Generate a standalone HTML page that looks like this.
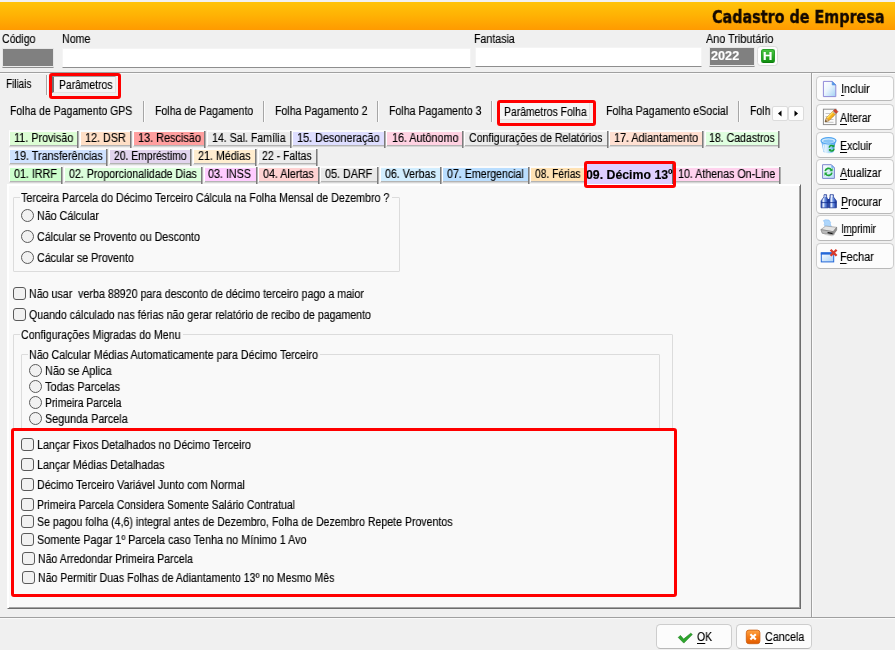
<!DOCTYPE html>
<html lang="pt-BR"><head><meta charset="utf-8"><title>Cadastro de Empresa</title>
<style>
html,body{margin:0;padding:0}
body{width:895px;height:650px;overflow:hidden;background:#f0f0f0}
#app{position:relative;width:895px;height:650px;overflow:hidden;background:#f0f0f0;font:12px 'Liberation Sans',sans-serif;color:#000}
#app div,#app span{position:absolute;box-sizing:border-box}
.t{white-space:nowrap;transform-origin:0 50%;z-index:5;will-change:transform;-webkit-text-stroke:.15px currentColor}
.t u{text-decoration:underline;text-underline-offset:1.6px;text-decoration-thickness:1px}
.topw{left:0;top:0;width:895px;height:2px;background:#f1f1f1}
.bar{left:0;top:2px;width:895px;height:28px;background:linear-gradient(#ffc30a,#ffb304 45%,#ff9a00)}
.graybox{background:linear-gradient(#808080,#808080) 0 0/100% 17px no-repeat #ececec;border:1px solid #e6e6e6;border-bottom-color:#8e8e8e}
.inp{background:#fff;border:1px solid #f4f4f4;border-bottom-color:#8e8e8e}
.hbtn{left:757px;top:46px;width:21px;height:20px;background:#fdfdfd;border:1px solid #dadada;border-radius:3.5px}
.hin{left:3px;top:2px;width:14px;height:14px;border-radius:2.5px;background:linear-gradient(#48c440,#129012);border:1px solid #2aa02a;border-bottom-color:#0c7c0c}
.hl{height:2px;background:linear-gradient(#a0a0a0 50%,#fafafa 50%)}
.vl{width:2px;background:linear-gradient(90deg,#a0a0a0 50%,#fafafa 50%)}
.vsep{width:2px;background:linear-gradient(90deg,#a6a6a6 50%,#fcfcfc 50%)}
.seltab{background:#f6f6f6;border-left:2px solid #707070;border-top:1px solid #a0a0a0;border-right:1px solid #e4e4e4;border-bottom:1px solid #e4e4e4}
.red{border:3px solid #ff0000;border-radius:3px;z-index:8}
.scr{width:16px;height:15px;background:#fdfdfd;border:1px solid #dcdcdc;border-radius:2px}
.scr svg{position:absolute;left:-1px;top:-1px}
.ct{height:17px;border-top:2px solid #fbfbfb;border-left:1px solid #fff;border-bottom:2px solid #d6d6d6}
.ct::before{content:"";position:absolute;left:0;right:0;bottom:-1px;height:1px;background:#b4b4b4}
.ct::after{content:"";position:absolute;right:0;top:-1px;width:2px;height:17px;background:linear-gradient(90deg,#7c7c7c 50%,#b0b0b0 50%)}
.ctsel{background:#decfff;border-right:1px solid #6e6e6e}
.panel{left:7px;top:184px;width:794px;height:425px;background:#f9f9f9;border:1px solid;border-color:#fff #6c6c6c #6c6c6c #fff;box-shadow:inset 1px 1px 0 #fff,inset -1px -1px 0 #a4a4a4}
.gb{border:1px solid #dcdcdc;border-radius:1px}
.gbl{height:8px;background:#f9f9f9}
.rd{width:13px;height:13px;border-radius:50%;border:1px solid #5a5a5a;background:#f1f1f1}
.cb{width:13px;height:13px;border-radius:3px;border:1px solid #5a5a5a;background:#f1f1f1}
.redfill{background:#f9f9f9}
.btn{background:#fcfcfc;border:1px solid #cdcdcd;border-bottom-color:#b9b9b9;border-radius:4.5px}
.ico{width:24px;height:25px}
.ico svg{position:absolute;left:0;top:0}

</style></head>
<body>
<div id="app">
<div class="topw"></div><div class="bar"></div>
<div class="graybox" style="left:2px;top:48px;width:52px;height:20px"></div>
<div class="inp" style="left:62px;top:48px;width:409px;height:20px"></div>
<div class="inp" style="left:475px;top:47px;width:227px;height:20px"></div>
<div class="graybox" style="left:709px;top:47px;width:46px;height:20px"></div>
<div class="hbtn"><div class="hin"></div></div>
<div class="hl" style="left:0;top:72px;width:895px"></div>
<div class="hl" style="left:0;top:617px;width:895px"></div>
<div class="vl" style="left:811px;top:73px;height:544px"></div>
<div class="vsep" style="left:46px;top:75px;height:20px"></div>
<div class="seltab" style="left:52px;top:76px;width:64px;height:17px"></div>
<div class="red" style="left:49px;top:73px;width:72px;height:26px"></div>
<div class="vsep" style="left:143px;top:101px;height:21px"></div>
<div class="vsep" style="left:263px;top:101px;height:21px"></div>
<div class="vsep" style="left:377px;top:101px;height:21px"></div>
<div class="vsep" style="left:491px;top:101px;height:21px"></div>
<div class="seltab" style="left:498px;top:102px;width:92px;height:18px"></div>
<div class="red" style="left:497px;top:100px;width:99px;height:26px"></div>
<div class="vsep" style="left:738px;top:101px;height:21px"></div>
<div class="scr" style="left:772px;top:106px"><svg width="16" height="15" viewBox="0 0 16 15"><path d="M9.5 4.5v6l-3.5-3z" fill="#000"/></svg></div>
<div class="scr" style="left:788px;top:106px"><svg width="16" height="15" viewBox="0 0 16 15"><path d="M6.5 4.5v6l3.5-3z" fill="#000"/></svg></div>
<div class="ct" style="left:9px;top:130px;width:70px;background:#dcfdd4"></div>
<div class="ct" style="left:80px;top:130px;width:52px;background:#ffdfc6"></div>
<div class="ct" style="left:133px;top:130px;width:73px;background:#ff9f9f"></div>
<div class="ct" style="left:207px;top:130px;width:85px;background:#ebebeb"></div>
<div class="ct" style="left:292px;top:130px;width:94px;background:#dedeff"></div>
<div class="ct" style="left:386px;top:130px;width:78px;background:#ffd2e2"></div>
<div class="ct" style="left:464px;top:130px;width:145px;background:#ececec"></div>
<div class="ct" style="left:609px;top:130px;width:95px;background:#ffe0d2"></div>
<div class="ct" style="left:705px;top:130px;width:75px;background:#e0ffe0"></div>
<div class="ct" style="left:9px;top:148px;width:99px;background:#cfe2ff"></div>
<div class="ct" style="left:109px;top:148px;width:83px;background:#e2d4ee"></div>
<div class="ct" style="left:193px;top:148px;width:64px;background:#ffedcf"></div>
<div class="ct" style="left:258px;top:148px;width:60px;background:#ececec"></div>
<div class="ct" style="left:9px;top:166px;width:54px;background:#ccffcc"></div>
<div class="ct" style="left:64px;top:166px;width:139px;background:#dcffdc"></div>
<div class="ct" style="left:204px;top:166px;width:54px;background:#ffccff"></div>
<div class="ct" style="left:258px;top:166px;width:62px;background:#ffd2d2"></div>
<div class="ct" style="left:320px;top:166px;width:59px;background:#e9e9e9"></div>
<div class="ct" style="left:380px;top:166px;width:62px;background:#d2eeff"></div>
<div class="ct" style="left:442px;top:166px;width:88px;background:#badeff"></div>
<div class="ct" style="left:530px;top:166px;width:58px;background:#ffe2b4"></div>
<div class="ct" style="left:673px;top:166px;width:108px;background:#ffd2ee"></div>
<div class="ctsel" style="left:587px;top:164px;width:86px;height:21px"></div>
<div class="red" style="left:584px;top:161px;width:92px;height:27px"></div>
<div class="panel"></div>
<div class="gb" style="left:13px;top:197px;width:387px;height:75px"></div>
<div class="gbl" style="left:20px;top:194px;width:372px"></div>
<div class="rd" style="left:21px;top:209px"></div>
<div class="rd" style="left:21px;top:230px"></div>
<div class="rd" style="left:21px;top:251px"></div>
<div class="cb" style="left:13px;top:287px"></div>
<div class="cb" style="left:13px;top:308px"></div>
<div class="gb" style="left:13px;top:334px;width:660px;height:262px"></div>
<div class="gbl" style="left:20px;top:331px;width:163px"></div>
<div class="gb" style="left:21px;top:354px;width:639px;height:75px"></div>
<div class="gbl" style="left:28px;top:351px;width:292px"></div>
<div class="rd" style="left:29px;top:364px"></div>
<div class="rd" style="left:29px;top:380px"></div>
<div class="rd" style="left:29px;top:396px"></div>
<div class="rd" style="left:29px;top:412px"></div>
<div class="redfill" style="left:14px;top:431px;width:660px;height:163px"></div>
<div class="cb" style="left:21px;top:438px"></div>
<div class="cb" style="left:21px;top:458px"></div>
<div class="cb" style="left:21px;top:478px"></div>
<div class="cb" style="left:21px;top:498px"></div>
<div class="cb" style="left:21px;top:515px"></div>
<div class="cb" style="left:21px;top:533px"></div>
<div class="cb" style="left:22px;top:552px"></div>
<div class="cb" style="left:22px;top:571px"></div>
<div class="red" style="left:11px;top:428px;width:666px;height:169px"></div>
<div class="btn" style="left:816px;top:76px;width:78px;height:25px"></div>
<div class="ico" style="left:817px;top:76px"><svg width="24" height="25" viewBox="0 0 24 25"><defs><linearGradient id="gd1" x1="0" y1="0" x2="1" y2="1"><stop offset="0" stop-color="#ffffff"/><stop offset=".45" stop-color="#eaf5fd"/><stop offset="1" stop-color="#9fd0f3"/></linearGradient></defs>
<path d="M6.4 5.4H15.2L18.8 9V20.6H6.4Z" fill="url(#gd1)" stroke="#8f8ad8" stroke-width="1"/>
<path d="M15.2 5.4V9H18.8Z" fill="#4f9be8" stroke="#5c8fe0" stroke-width=".6"/></svg></div>
<div class="btn" style="left:816px;top:104px;width:78px;height:26px"></div>
<div class="ico" style="left:817px;top:104px"><svg width="24" height="25" viewBox="0 0 24 25"><rect x="6.4" y="5.2" width="12.6" height="15.4" fill="#fbfbfb" stroke="#8c8c8c"/>
<path d="M8.5 9.5h5M8.5 12.5h8M8.5 15.5h8M8.5 18.3h8" stroke="#c4c4c4" stroke-width="1"/>
<g transform="translate(8.2 17.8) rotate(-45.2)">
<path d="M0 0L3.6-1.9H13.4v3.8H3.6z" fill="#f7b21c" stroke="#b8720c" stroke-width=".6"/>
<path d="M3.6-1.9H13.4v1.3H3.6z" fill="#ffe468"/>
<path d="M0 0L3.6-1.9v3.8z" fill="#e9c79a" stroke="#8a6a3a" stroke-width=".4"/>
<path d="M0 0L1.6-.85v1.7z" fill="#2a2420"/>
<path d="M13.2-1.9H16.2v3.8H13.2z" fill="#d2452e" stroke="#9a2c18" stroke-width=".5"/>
<path d="M12.2-1.9h1.2v3.8h-1.2z" fill="#b9b9b9"/>
</g></svg></div>
<div class="btn" style="left:816px;top:132px;width:78px;height:26px"></div>
<div class="ico" style="left:817px;top:132px"><svg width="24" height="25" viewBox="0 0 24 25"><defs><linearGradient id="gb1" x1="0" y1="0" x2="1" y2="0"><stop offset="0" stop-color="#4aa2f0"/><stop offset=".3" stop-color="#e4f3fe"/><stop offset=".65" stop-color="#9ad0f8"/><stop offset="1" stop-color="#3f96ea"/></linearGradient></defs>
<path d="M4.3 9.2L6.4 20Q11.5 22.4 16.6 20L18.7 9.2Z" fill="url(#gb1)"/>
<ellipse cx="11.5" cy="8.8" rx="7.5" ry="3.2" fill="#cfe8fc" stroke="#4fa4f0" stroke-width="1.2"/>
<ellipse cx="11.5" cy="9.2" rx="5.3" ry="1.7" fill="#86c4f6"/>
<path d="M6.2 12.5L7.3 19.3" stroke="#fff" stroke-width="1" opacity=".8"/>
<path d="M12.2 15.6a2.5 2.5 0 0 1 4.2-1.5M17.1 16.6a2.5 2.5 0 0 1-4.3 1.6" stroke="#18a030" stroke-width="1.5" fill="none"/>
<path d="M17.4 12.6v2.6h-2.6zM11.9 19.6v-2.6h2.6z" fill="#18a030"/></svg></div>
<div class="btn" style="left:816px;top:159px;width:78px;height:26px"></div>
<div class="ico" style="left:817px;top:160px"><svg width="24" height="25" viewBox="0 0 24 25"><defs><linearGradient id="ga1" x1="0" y1="0" x2="1" y2="1"><stop offset="0" stop-color="#ffffff"/><stop offset="1" stop-color="#b8dcf6"/></linearGradient></defs>
<path d="M5.6 4.7H14.4L17.4 7.7V18.4H5.6Z" fill="url(#ga1)" stroke="#7d86cc" stroke-width="1"/>
<path d="M14.4 4.7V7.7H17.4Z" fill="#6aa8ea"/>
<path d="M8.2 11.2a3.4 3.4 0 0 1 6.2-1.3" stroke="#1ea636" stroke-width="1.7" fill="none"/>
<path d="M15.6 8.1v3.2h-3.2z" fill="#1ea636"/>
<path d="M14.9 12.6a3.4 3.4 0 0 1-6.2 1.3" stroke="#1ea636" stroke-width="1.7" fill="none"/>
<path d="M7.5 15.7v-3.2h3.2z" fill="#1ea636"/></svg></div>
<div class="btn" style="left:816px;top:188px;width:78px;height:26px"></div>
<div class="ico" style="left:817px;top:188px"><svg width="24" height="25" viewBox="0 0 24 25"><defs><linearGradient id="gp1" x1="0" y1="0" x2="1" y2="0"><stop offset="0" stop-color="#173aa4"/><stop offset=".32" stop-color="#e6efff"/><stop offset=".55" stop-color="#6a90e2"/><stop offset="1" stop-color="#142f96"/></linearGradient></defs>
<path d="M7 6.7h2.6v2.2l1.8 4v6.9H4v-6.9l3-4z" fill="url(#gp1)" stroke="#122c8c" stroke-width=".7"/>
<path d="M13 6.7h3.4v2.2l3 4v6.9h-7.4v-6.9l1-4z" fill="url(#gp1)" stroke="#122c8c" stroke-width=".7"/>
<rect x="10.6" y="11" width="2.2" height="3.6" fill="#1a389c"/>
<path d="M4 14.6h7.4M12 14.6h7.4" stroke="#122c8c" stroke-width=".8"/>
<rect x="7.4" y="7.5" width="1.8" height="1.2" fill="#eef3ff"/><rect x="13.8" y="7.5" width="1.9" height="1.2" fill="#eef3ff"/></svg></div>
<div class="btn" style="left:816px;top:215px;width:78px;height:26px"></div>
<div class="ico" style="left:817px;top:216px"><svg width="24" height="25" viewBox="0 0 24 25"><path d="M6.4 4.6l2-.8 3.6.3 1.6 2.4-.4 1.4 1.4 3.2-5.6 1.6-1.8-4.2.6-1.4z" fill="#add6fc" stroke="#86bcf4" stroke-width=".6"/>
<path d="M3.9 13.6l4.8-3.6 11 1.3-3.5 4.4z" fill="#e4e4e4" stroke="#8e8e8e" stroke-width=".6"/>
<path d="M3.9 13.6l12.3 2.1v3.3L5.2 17.3z" fill="#b9b9b9" stroke="#767676" stroke-width=".6"/>
<path d="M16.2 15.7l3.5-4.4v2.7l-3.5 5z" fill="#979797" stroke="#6a6a6a" stroke-width=".5"/>
<path d="M10.6 16.6l5 .9" stroke="#161616" stroke-width="1.3"/>
<path d="M7.6 18.4l7.6 1.4 2.6-1.5" stroke="#d0d0d0" stroke-width="1" fill="none"/></svg></div>
<div class="btn" style="left:816px;top:243px;width:78px;height:26px"></div>
<div class="ico" style="left:817px;top:244px"><svg width="24" height="25" viewBox="0 0 24 25"><defs><linearGradient id="gf1" x1="0" y1="0" x2="1" y2="1"><stop offset="0" stop-color="#ffffff"/><stop offset="1" stop-color="#a8d0f6"/></linearGradient></defs>
<rect x="4.3" y="8.9" width="12.4" height="9" fill="url(#gf1)" stroke="#2468d8" stroke-width="1"/>
<rect x="3.8" y="8.4" width="13.4" height="2.2" fill="#2468d8"/>
<path d="M13.6 5.8l6 6M19.6 5.8l-6 6" stroke="#d83a2a" stroke-width="2.3"/></svg></div>
<div class="btn" style="left:656px;top:624px;width:76px;height:25px"></div>
<div class="ico" style="left:676px;top:624px"><svg width="24" height="25" viewBox="0 0 24 25"><path d="M2.2 13.4l2.3-1.9 3.1 3.6 7.2-5.9 1.5 1.3-8.5 8.6z" fill="#2da62d" stroke="#1a7a1a" stroke-width=".6"/></svg></div>
<div class="btn" style="left:736px;top:624px;width:76px;height:25px"></div>
<div class="ico" style="left:745px;top:624px"><svg width="24" height="25" viewBox="0 0 24 25"><defs><linearGradient id="gc1" x1="0" y1="0" x2="0" y2="1"><stop offset="0" stop-color="#ffa444"/><stop offset=".5" stop-color="#f57a14"/><stop offset="1" stop-color="#e05a00"/></linearGradient></defs>
<rect x="1.3" y="6.1" width="13.6" height="13.6" rx="2.6" fill="url(#gc1)" stroke="#cc5c0c" stroke-width=".8"/>
<path d="M5.4 10.2l5.4 5.4M10.8 10.2l-5.4 5.4" stroke="#fff" stroke-width="2.1"/></svg></div>
<span class="t" style="left:712.3px;top:6px;line-height:22px;transform:scaleX(0.8197);font-size:17.5px;font-weight:bold;color:#140900;font-family:'DejaVu Sans','Liberation Sans',sans-serif;-webkit-text-stroke:.35px currentColor">Cadastro de Empresa</span>
<span class="t" style="left:2.0px;top:32px;line-height:15px;transform:scaleX(0.8809)">Código</span>
<span class="t" style="left:62.0px;top:32px;line-height:15px;transform:scaleX(0.8902)">Nome</span>
<span class="t" style="left:473.7px;top:32px;line-height:15px;transform:scaleX(0.8842)">Fantasia</span>
<span class="t" style="left:705.8px;top:32px;line-height:15px;transform:scaleX(0.9020)">Ano Tributário</span>
<span class="t" style="left:711.1px;top:49px;line-height:15px;transform:scaleX(1.0561);font-weight:bold;color:#fff">2022</span>
<span class="t" style="left:763.0px;top:49px;line-height:14px;transform:scaleX(1.1188);font-size:11.5px;font-weight:bold;color:#fff">H</span>
<span class="t" style="left:6.2px;top:77px;line-height:15px;transform:scaleX(0.8249)">Filiais</span>
<span class="t" style="left:59.1px;top:78px;line-height:15px;transform:scaleX(0.8625)">Parâmetros</span>
<span class="t" style="left:10.3px;top:104px;line-height:15px;transform:scaleX(0.8730)">Folha de Pagamento GPS</span>
<span class="t" style="left:154.8px;top:104px;line-height:15px;transform:scaleX(0.8813)">Folha de Pagamento</span>
<span class="t" style="left:274.9px;top:104px;line-height:15px;transform:scaleX(0.8840)">Folha Pagamento 2</span>
<span class="t" style="left:389.1px;top:104px;line-height:15px;transform:scaleX(0.8840)">Folha Pagamento 3</span>
<span class="t" style="left:503.9px;top:105px;line-height:15px;transform:scaleX(0.8671)">Parâmetros Folha</span>
<span class="t" style="left:606.3px;top:104px;line-height:15px;transform:scaleX(0.8892)">Folha Pagamento eSocial</span>
<span class="t" style="left:750.2px;top:104px;line-height:15px;transform:scaleX(0.8782)">Folh</span>
<span class="t" style="left:14.2px;top:131px;line-height:15px;transform:scaleX(0.8995)">11. Provisão</span>
<span class="t" style="left:85.3px;top:131px;line-height:15px;transform:scaleX(0.8973)">12. DSR</span>
<span class="t" style="left:137.8px;top:131px;line-height:15px;transform:scaleX(0.9067)">13. Rescisão</span>
<span class="t" style="left:212.0px;top:131px;line-height:15px;transform:scaleX(0.8828)">14. Sal. Família</span>
<span class="t" style="left:297.0px;top:131px;line-height:15px;transform:scaleX(0.9037)">15. Desoneração</span>
<span class="t" style="left:391.5px;top:131px;line-height:15px;transform:scaleX(0.8965)">16. Autônomo</span>
<span class="t" style="left:469.0px;top:131px;line-height:15px;transform:scaleX(0.8810)">Configurações de Relatórios</span>
<span class="t" style="left:613.8px;top:131px;line-height:15px;transform:scaleX(0.9004)">17. Adiantamento</span>
<span class="t" style="left:708.8px;top:131px;line-height:15px;transform:scaleX(0.8793)">18. Cadastros</span>
<span class="t" style="left:13.8px;top:149px;line-height:15px;transform:scaleX(0.8985)">19. Transferências</span>
<span class="t" style="left:113.7px;top:149px;line-height:15px;transform:scaleX(0.8640)">20. Empréstimo</span>
<span class="t" style="left:198.1px;top:149px;line-height:15px;transform:scaleX(0.8943)">21. Médias</span>
<span class="t" style="left:261.9px;top:149px;line-height:15px;transform:scaleX(0.8747)">22 - Faltas</span>
<span class="t" style="left:14.2px;top:167px;line-height:15px;transform:scaleX(0.8914)">01. IRRF</span>
<span class="t" style="left:68.6px;top:167px;line-height:15px;transform:scaleX(0.8869)">02. Proporcionalidade Dias</span>
<span class="t" style="left:208.2px;top:167px;line-height:15px;transform:scaleX(0.8953)">03. INSS</span>
<span class="t" style="left:263.0px;top:167px;line-height:15px;transform:scaleX(0.8941)">04. Alertas</span>
<span class="t" style="left:324.9px;top:167px;line-height:15px;transform:scaleX(0.8977)">05. DARF</span>
<span class="t" style="left:384.8px;top:167px;line-height:15px;transform:scaleX(0.8837)">06. Verbas</span>
<span class="t" style="left:446.9px;top:167px;line-height:15px;transform:scaleX(0.8868)">07. Emergencial</span>
<span class="t" style="left:535.2px;top:167px;line-height:15px;transform:scaleX(0.8546)">08. Férias</span>
<span class="t" style="left:677.9px;top:167px;line-height:15px;transform:scaleX(0.8892)">10. Athenas On-Line</span>
<span class="t" style="left:586.0px;top:168px;line-height:15px;transform:scaleX(1.0256);font-weight:bold">09. Décimo 13º</span>
<span class="t" style="left:21.3px;top:191px;line-height:15px;transform:scaleX(0.8899)">Terceira Parcela do Décimo Terceiro Cálcula na Folha Mensal de Dezembro ?</span>
<span class="t" style="left:36.9px;top:209px;line-height:15px;transform:scaleX(0.8923)">Não Cálcular</span>
<span class="t" style="left:36.9px;top:230px;line-height:15px;transform:scaleX(0.8945)">Cálcular se Provento ou Desconto</span>
<span class="t" style="left:36.9px;top:251px;line-height:15px;transform:scaleX(0.8912)">Cácular se Provento</span>
<span class="t" style="left:29.0px;top:287px;line-height:15px;transform:scaleX(0.8885)">Não usar&nbsp; verba 88920 para desconto de décimo terceiro pago a maior</span>
<span class="t" style="left:29.0px;top:308px;line-height:15px;transform:scaleX(0.8852)">Quando cálculado nas férias não gerar relatório de recibo de pagamento</span>
<span class="t" style="left:21.3px;top:328px;line-height:15px;transform:scaleX(0.8856)">Configurações Migradas do Menu</span>
<span class="t" style="left:29.0px;top:348px;line-height:15px;transform:scaleX(0.8900)">Não Calcular Médias Automaticamente para Décimo Terceiro</span>
<span class="t" style="left:45.0px;top:364px;line-height:15px;transform:scaleX(0.9075)">Não se Aplica</span>
<span class="t" style="left:45.0px;top:380px;line-height:15px;transform:scaleX(0.9153)">Todas Parcelas</span>
<span class="t" style="left:45.0px;top:396px;line-height:15px;transform:scaleX(0.8613)">Primeira Parcela</span>
<span class="t" style="left:45.0px;top:412px;line-height:15px;transform:scaleX(0.8971)">Segunda Parcela</span>
<span class="t" style="left:36.8px;top:438px;line-height:15px;transform:scaleX(0.8941)">Lançar Fixos Detalhados no Décimo Terceiro</span>
<span class="t" style="left:36.8px;top:458px;line-height:15px;transform:scaleX(0.8931)">Lançar Médias Detalhadas</span>
<span class="t" style="left:36.8px;top:478px;line-height:15px;transform:scaleX(0.8924)">Décimo Terceiro Variável Junto com Normal</span>
<span class="t" style="left:36.8px;top:498px;line-height:15px;transform:scaleX(0.8669)">Primeira Parcela Considera Somente Salário Contratual</span>
<span class="t" style="left:36.8px;top:515px;line-height:15px;transform:scaleX(0.8823)">Se pagou folha (4,6) integral antes de Dezembro, Folha de Dezembro Repete Proventos</span>
<span class="t" style="left:36.8px;top:533px;line-height:15px;transform:scaleX(0.9023)">Somente Pagar 1º Parcela caso Tenha no Mínimo 1 Avo</span>
<span class="t" style="left:37.9px;top:552px;line-height:15px;transform:scaleX(0.8764)">Não Arredondar Primeira Parcela</span>
<span class="t" style="left:37.9px;top:571px;line-height:15px;transform:scaleX(0.8790)">Não Permitir Duas Folhas de Adiantamento 13º no Mesmo Mês</span>
<span class="t" style="left:840.5px;top:82px;line-height:15px;transform:scaleX(0.8991)"><u>I</u>ncluir</span>
<span class="t" style="left:840.3px;top:111px;line-height:15px;transform:scaleX(0.8795)"><u>A</u>lterar</span>
<span class="t" style="left:840.4px;top:139px;line-height:15px;transform:scaleX(0.8826)"><u>E</u>xcluir</span>
<span class="t" style="left:840.3px;top:166px;line-height:15px;transform:scaleX(0.8843)"><u>A</u>tualizar</span>
<span class="t" style="left:840.5px;top:195px;line-height:15px;transform:scaleX(0.8864)"><u>P</u>rocurar</span>
<span class="t" style="left:841.3px;top:222px;line-height:15px;transform:scaleX(0.8052)">I<u>m</u>primir</span>
<span class="t" style="left:840.4px;top:250px;line-height:15px;transform:scaleX(0.9043)"><u>F</u>echar</span>
<span class="t" style="left:696.8px;top:630px;line-height:15px;transform:scaleX(0.8698)"><u>O</u>K</span>
<span class="t" style="left:764.6px;top:630px;line-height:15px;transform:scaleX(0.8945)"><u>C</u>ancela</span>
</div>
</body></html>
